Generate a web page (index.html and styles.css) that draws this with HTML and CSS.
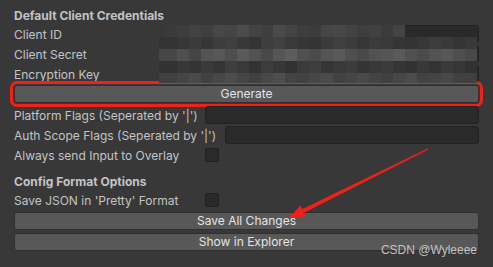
FILE: index.html
```html
<!DOCTYPE html>
<html lang="en">
<head>
	<meta charset="UTF-8">
	<title>Config Editor</title>
	<link rel="stylesheet" href="styles.css">
</head>
<body>
	<div class="inspector">
		<div class="header">Default Client Credentials</div>
		<div class="row"><span class="label">Client ID</span><span class="field"></span></div>
		<div class="row"><span class="label">Client Secret</span><span class="field"></span></div>
		<div class="row"><span class="label">Encryption Key</span><span class="field"></span></div>
		<div class="row row-generate"><button class="btn btn-marked" type="button">Generate</button></div>
		<div class="row"><span class="label label-platform">Platform Flags (Seperated by '|')</span><span class="field"></span></div>
		<div class="row"><span class="label label-auth">Auth Scope Flags (Seperated by '|')</span><span class="field"></span></div>
		<div class="row"><span class="label label-platform">Always send Input to Overlay</span><span class="toggle"></span></div>

		<div class="header header-gap">Config Format Options</div>
		<div class="row"><span class="label label-platform">Save JSON in 'Pretty' Format</span><span class="toggle"></span></div>
		<div class="row row-btn"><button class="btn" type="button">Save All Changes</button></div>
		<div class="row row-btn"><button class="btn" type="button">Show in Explorer</button></div>
	</div>

	<!-- pixelated secrets -->
	<svg class="mosaic" width="314" height="58" viewBox="0 0 314 58">
		<g>
			<rect x="0" y="0" width="12" height="12" fill="#3a3a3a"/><rect x="12" y="0" width="12" height="12" fill="#3d3d3d"/><rect x="24" y="0" width="12" height="12" fill="#424242"/><rect x="36" y="0" width="12" height="12" fill="#3f3f3f"/><rect x="48" y="0" width="12" height="12" fill="#474747"/><rect x="60" y="0" width="12" height="12" fill="#454545"/><rect x="72" y="0" width="12" height="12" fill="#4c4c4c"/><rect x="84" y="0" width="12" height="12" fill="#434343"/><rect x="96" y="0" width="12" height="12" fill="#3f3f3f"/><rect x="108" y="0" width="12" height="12" fill="#4a4a4a"/><rect x="120" y="0" width="12" height="12" fill="#444444"/><rect x="132" y="0" width="12" height="12" fill="#3e3e3e"/><rect x="144" y="0" width="12" height="12" fill="#3c3c3c"/><rect x="156" y="0" width="12" height="12" fill="#464646"/><rect x="168" y="0" width="12" height="12" fill="#484848"/><rect x="180" y="0" width="12" height="12" fill="#434343"/><rect x="192" y="0" width="12" height="12" fill="#3e3e3e"/><rect x="204" y="0" width="12" height="12" fill="#414141"/><rect x="216" y="0" width="12" height="12" fill="#3b3b3b"/><rect x="228" y="0" width="12" height="12" fill="#434343"/>
		</g>
		<g>
			<rect x="-6" y="12" width="18" height="12" fill="#333333"/><rect x="12" y="12" width="12" height="12" fill="#373737"/><rect x="24" y="12" width="12" height="12" fill="#3b3b3b"/><rect x="36" y="12" width="12" height="12" fill="#363636"/><rect x="48" y="12" width="12" height="12" fill="#3d3d3d"/><rect x="60" y="12" width="12" height="12" fill="#404040"/><rect x="72" y="12" width="12" height="12" fill="#383838"/><rect x="84" y="12" width="12" height="12" fill="#343434"/><rect x="96" y="12" width="12" height="12" fill="#3e3e3e"/><rect x="108" y="12" width="12" height="12" fill="#414141"/><rect x="120" y="12" width="12" height="12" fill="#393939"/><rect x="132" y="12" width="12" height="12" fill="#363636"/><rect x="144" y="12" width="12" height="12" fill="#343434"/><rect x="156" y="12" width="12" height="12" fill="#3a3a3a"/><rect x="168" y="12" width="12" height="12" fill="#3f3f3f"/><rect x="180" y="12" width="12" height="12" fill="#3c3c3c"/><rect x="192" y="12" width="12" height="12" fill="#363636"/><rect x="204" y="12" width="12" height="12" fill="#3b3b3b"/><rect x="216" y="12" width="12" height="12" fill="#393939"/><rect x="228" y="12" width="12" height="12" fill="#353535"/><rect x="240" y="12" width="12" height="12" fill="#333333"/><rect x="252" y="12" width="12" height="12" fill="#373737"/><rect x="264" y="12" width="12" height="12" fill="#3c3c3c"/><rect x="276" y="12" width="12" height="12" fill="#393939"/><rect x="288" y="12" width="12" height="12" fill="#353535"/><rect x="300" y="12" width="12" height="12" fill="#393939"/>
		</g>
		<g>
			<rect x="-6" y="24" width="18" height="12" fill="#474747"/><rect x="12" y="24" width="12" height="12" fill="#4f4f4f"/><rect x="24" y="24" width="12" height="12" fill="#454545"/><rect x="36" y="24" width="12" height="12" fill="#535353"/><rect x="48" y="24" width="12" height="12" fill="#575757"/><rect x="60" y="24" width="12" height="12" fill="#4e4e4e"/><rect x="72" y="24" width="12" height="12" fill="#5a5a5a"/><rect x="84" y="24" width="12" height="12" fill="#525252"/><rect x="96" y="24" width="12" height="12" fill="#494949"/><rect x="108" y="24" width="12" height="12" fill="#565656"/><rect x="120" y="24" width="12" height="12" fill="#5c5c5c"/><rect x="132" y="24" width="12" height="12" fill="#505050"/><rect x="144" y="24" width="12" height="12" fill="#4b4b4b"/><rect x="156" y="24" width="12" height="12" fill="#545454"/><rect x="168" y="24" width="12" height="12" fill="#595959"/><rect x="180" y="24" width="12" height="12" fill="#4f4f4f"/><rect x="192" y="24" width="12" height="12" fill="#4a4a4a"/><rect x="204" y="24" width="12" height="12" fill="#525252"/><rect x="216" y="24" width="12" height="12" fill="#555555"/><rect x="228" y="24" width="12" height="12" fill="#5a5a5a"/><rect x="240" y="24" width="12" height="12" fill="#505050"/><rect x="252" y="24" width="12" height="12" fill="#4b4b4b"/><rect x="264" y="24" width="12" height="12" fill="#535353"/><rect x="276" y="24" width="12" height="12" fill="#575757"/><rect x="288" y="24" width="12" height="12" fill="#4f4f4f"/><rect x="300" y="24" width="12" height="12" fill="#494949"/>
		</g>
		<g>
			<rect x="-6" y="36" width="18" height="12" fill="#323232"/><rect x="12" y="36" width="12" height="12" fill="#373737"/><rect x="24" y="36" width="12" height="12" fill="#343434"/><rect x="36" y="36" width="12" height="12" fill="#3a3a3a"/><rect x="48" y="36" width="12" height="12" fill="#353535"/><rect x="60" y="36" width="12" height="12" fill="#3e3e3e"/><rect x="72" y="36" width="12" height="12" fill="#393939"/><rect x="84" y="36" width="12" height="12" fill="#333333"/><rect x="96" y="36" width="12" height="12" fill="#3c3c3c"/><rect x="108" y="36" width="12" height="12" fill="#373737"/><rect x="120" y="36" width="12" height="12" fill="#323232"/><rect x="132" y="36" width="12" height="12" fill="#3b3b3b"/><rect x="144" y="36" width="12" height="12" fill="#3e3e3e"/><rect x="156" y="36" width="12" height="12" fill="#353535"/><rect x="168" y="36" width="12" height="12" fill="#393939"/><rect x="180" y="36" width="12" height="12" fill="#3c3c3c"/><rect x="192" y="36" width="12" height="12" fill="#343434"/><rect x="204" y="36" width="12" height="12" fill="#383838"/><rect x="216" y="36" width="12" height="12" fill="#3b3b3b"/><rect x="228" y="36" width="12" height="12" fill="#353535"/><rect x="240" y="36" width="12" height="12" fill="#323232"/><rect x="252" y="36" width="12" height="12" fill="#383838"/><rect x="264" y="36" width="12" height="12" fill="#343434"/><rect x="276" y="36" width="12" height="12" fill="#3a3a3a"/><rect x="288" y="36" width="12" height="12" fill="#363636"/><rect x="300" y="36" width="12" height="12" fill="#313131"/>
		</g>
		<g>
			<rect x="-6" y="48" width="18" height="10" fill="#3f3f3f"/><rect x="12" y="48" width="12" height="10" fill="#454545"/><rect x="24" y="48" width="12" height="10" fill="#4a4a4a"/><rect x="36" y="48" width="12" height="10" fill="#414141"/><rect x="48" y="48" width="12" height="10" fill="#474747"/><rect x="60" y="48" width="12" height="10" fill="#4d4d4d"/><rect x="72" y="48" width="12" height="10" fill="#454545"/><rect x="84" y="48" width="12" height="10" fill="#404040"/><rect x="96" y="48" width="12" height="10" fill="#484848"/><rect x="108" y="48" width="12" height="10" fill="#4e4e4e"/><rect x="120" y="48" width="12" height="10" fill="#444444"/><rect x="132" y="48" width="12" height="10" fill="#414141"/><rect x="144" y="48" width="12" height="10" fill="#474747"/><rect x="156" y="48" width="12" height="10" fill="#4b4b4b"/><rect x="168" y="48" width="12" height="10" fill="#424242"/><rect x="180" y="48" width="12" height="10" fill="#454545"/><rect x="192" y="48" width="12" height="10" fill="#4a4a4a"/><rect x="204" y="48" width="12" height="10" fill="#444444"/><rect x="216" y="48" width="12" height="10" fill="#404040"/><rect x="228" y="48" width="12" height="10" fill="#474747"/><rect x="240" y="48" width="12" height="10" fill="#4b4b4b"/><rect x="252" y="48" width="12" height="10" fill="#424242"/><rect x="264" y="48" width="12" height="10" fill="#454545"/><rect x="276" y="48" width="12" height="10" fill="#484848"/><rect x="288" y="48" width="12" height="10" fill="#414141"/><rect x="300" y="48" width="12" height="10" fill="#3f3f3f"/>
		</g>
	</svg>

	<!-- annotation arrow -->
	<svg class="arrow" width="493" height="267" viewBox="0 0 493 267">
		<polygon points="428.4,149.4 427.6,148.6 302.4,209.1 304.2,212.7" fill="#f0201a"/>
		<polygon points="289,218 300.6,205.5 303.3,210.9 306,216.3" fill="#f0201a"/>
	</svg>

	<div class="watermark">CSDN @Wyleeee</div>
</body>
</html>
```

FILE: styles.css
```css
body {
	margin: 0;
	padding: 0;
	background-color: #383838;
	font-family: Inter, "Noto Sans", sans-serif;
	font-size: 12px;
	color: #c4c4c4;
	width: 493px;
	height: 267px;
	overflow: hidden;
	position: relative;
}
.inspector {
	padding: 7px 14px 0 14px;
	display: flex;
	flex-direction: column;
	gap: 2px;
}
.header {
	font-weight: bold;
	height: 18px;
	line-height: 18px;
	margin-bottom: -2px;
}
.header-gap {
	margin-top: 7px;
}
.row {
	display: flex;
	align-items: center;
	height: 18px;
}
.row-generate {
	margin-bottom: 1px;
}
.row-btn {
	margin-top: 1px;
}
.label {
	width: 151px;
	flex-shrink: 0;
	white-space: nowrap;
	line-height: 18px;
	padding-top: 1px;
}
.label-platform {
	width: 191px;
}
.label-auth {
	width: 211px;
}
.field {
	flex: 1;
	height: 18px;
	box-sizing: border-box;
	background-color: #2a2a2a;
	border: 1px solid #212121;
	border-radius: 3px;
}
.toggle {
	width: 14px;
	height: 14px;
	box-sizing: border-box;
	background-color: #2a2a2a;
	border: 1px solid #212121;
	border-radius: 2px;
}
.btn {
	flex: 1;
	height: 18px;
	box-sizing: border-box;
	margin: 0;
	padding: 0;
	background-color: #585858;
	border: 1px solid #303030;
	border-radius: 3px;
	color: #e4e4e4;
	font-family: inherit;
	font-size: 12px;
	line-height: 16px;
	text-align: center;
}
.btn-marked {
	outline: 3px solid #f0201a;
	outline-offset: 1px;
}
.mosaic {
	position: absolute;
	left: 165px;
	top: 25px;
	overflow: visible;
}
.arrow {
	position: absolute;
	left: 0;
	top: 0;
}
.watermark {
	position: absolute;
	right: 16px;
	bottom: 10px;
	font-family: "Liberation Sans", Arial, sans-serif;
	font-size: 12px;
	color: #d0d0d0;
	opacity: 0.9;
}
```
